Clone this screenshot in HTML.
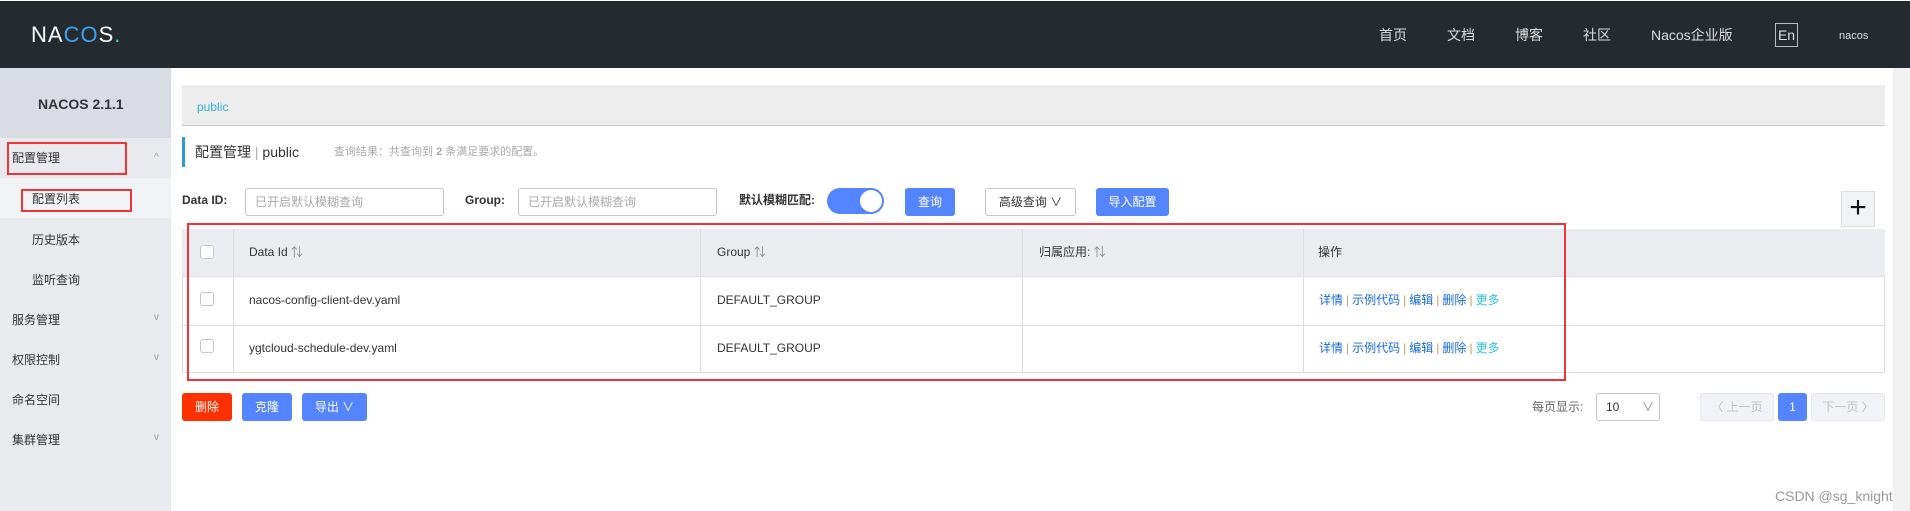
<!DOCTYPE html>
<html><head><meta charset="utf-8"><style>
*{box-sizing:border-box;margin:0;padding:0}
body{width:1910px;height:511px;overflow:hidden;background:#fff;font-family:"Liberation Sans","Noto Sans CJK SC",sans-serif;font-size:12px;color:#333;position:relative;line-height:1.15}
.a{position:absolute;white-space:nowrap}
.hdr{left:0;top:1px;width:1910px;height:67px;background:#252a2f}
.nav{top:27px;color:#ddd;font-size:14px}
.side{left:0;top:68px;width:171px;height:443px;background:#e8eaee}
.mi{left:12px;font-size:12px;color:#333}
.car{left:154px;color:#999;font-size:10px}
.btn{height:28px;line-height:28px;text-align:center;color:#fff;border-radius:3px;font-size:12px}
.inp{height:28px;border:1px solid #c4c6cf;border-radius:3px;color:#aaa;padding-left:9px;line-height:26px}
.lbl{font-weight:bold;color:#333;font-size:12px}
.cb{width:14px;height:14px;border:1px solid #c4c6cf;border-radius:3px;background:#fff}
.lk{color:#1a6ad8}
.sp{color:#c4a060;margin:0 3px}
</style></head><body>
<div class="a hdr"></div>
<div class="a" style="left:31px;top:22px;font-size:22px;color:#fff;letter-spacing:1px">NA<span style="color:#3aa3f0">CO</span>S<span style="color:#2fd0e0">.</span></div>
<div class="a nav" style="left:1379px">首页</div>
<div class="a nav" style="left:1447px">文档</div>
<div class="a nav" style="left:1515px">博客</div>
<div class="a nav" style="left:1583px">社区</div>
<div class="a nav" style="left:1651px">Nacos企业版</div>
<div class="a" style="left:1775px;top:23px;width:23px;height:24px;border:1px solid #bbb;color:#ddd;font-size:14px;text-align:center;line-height:22px">En</div>
<div class="a" style="left:1839px;top:30px;color:#ddd;font-size:11px">nacos</div>

<div class="a side"></div>
<div class="a" style="left:0;top:68px;width:171px;height:70px;background:#d9dde3"></div>
<div class="a" style="left:38px;top:96px;font-size:14px;font-weight:bold;color:#333">NACOS 2.1.1</div>
<div class="a" style="left:0;top:178px;width:171px;height:40px;background:#f2f3f5"></div>
<div class="a" style="left:7px;top:142px;width:120px;height:33px;border:2px solid #f0323a"></div>
<div class="a mi" style="top:152px">配置管理</div><div class="a car" style="top:152px">^</div>
<div class="a" style="left:21px;top:189px;width:111px;height:23px;border:2px solid #f0323a"></div>
<div class="a mi" style="left:32px;top:193px">配置列表</div>
<div class="a mi" style="left:32px;top:234px">历史版本</div>
<div class="a mi" style="left:32px;top:274px">监听查询</div>
<div class="a mi" style="top:314px">服务管理</div><div class="a car" style="top:312px">v</div>
<div class="a mi" style="top:354px">权限控制</div><div class="a car" style="top:352px">v</div>
<div class="a mi" style="top:394px">命名空间</div>
<div class="a mi" style="top:434px">集群管理</div><div class="a car" style="top:432px">v</div>

<div class="a" style="left:1893px;top:68px;width:17px;height:443px;background:#f1f1f1"></div>

<div class="a" style="left:182px;top:85px;width:1703px;height:41px;background:#ededed;border-bottom:1px solid #ccc"></div>
<div class="a" style="left:197px;top:101px;color:#2fb5d6;font-size:12px">public</div>
<div class="a" style="left:182px;top:137px;width:3px;height:30px;background:#2b9bd6"></div>
<div class="a" style="left:195px;top:144px;font-size:14px;color:#333">配置管理 <span style="color:#aaa">|</span> public</div>
<div class="a" style="left:334px;top:146px;font-size:11px;color:#aaa">查询结果：共查询到 <b>2</b> 条满足要求的配置。</div>

<div class="a lbl" style="left:182px;top:194px">Data ID:</div>
<div class="a inp" style="left:245px;top:188px;width:199px">已开启默认模糊查询</div>
<div class="a lbl" style="left:465px;top:194px">Group:</div>
<div class="a inp" style="left:518px;top:188px;width:199px">已开启默认模糊查询</div>
<div class="a lbl" style="left:739px;top:194px">默认模糊匹配:</div>
<div class="a" style="left:827px;top:188px;width:57px;height:26px;border-radius:13px;background:#5584ff"></div>
<div class="a" style="left:860px;top:190px;width:22px;height:22px;border-radius:11px;background:#fff"></div>
<div class="a btn" style="left:905px;top:188px;width:50px;background:#5584ff">查询</div>
<div class="a btn" style="left:985px;top:188px;width:91px;border:1px solid #c4c6cf;color:#333;line-height:26px">高级查询 ∨</div>
<div class="a btn" style="left:1096px;top:188px;width:73px;background:#5584ff">导入配置</div>
<div class="a" style="left:1841px;top:191px;width:34px;height:36px;background:#f2f3f5;border:1px solid #ddd;font-size:30px;line-height:32px;text-align:center;color:#111">+</div>

<div class="a" style="left:182px;top:229px;width:1703px;height:144px;border:1px solid #dcdee3"></div>
<div class="a" style="left:182px;top:229px;width:1703px;height:48px;background:#ebecf0;border-bottom:1px solid #dcdee3"></div>
<div class="a" style="left:182px;top:325px;width:1703px;height:1px;background:#dcdee3"></div>
<div class="a" style="left:233px;top:229px;width:1px;height:144px;background:#dcdee3"></div>
<div class="a" style="left:700px;top:229px;width:1px;height:144px;background:#dcdee3"></div>
<div class="a" style="left:1022px;top:229px;width:1px;height:144px;background:#dcdee3"></div>
<div class="a" style="left:1303px;top:229px;width:1px;height:144px;background:#dcdee3"></div>
<div class="a cb" style="left:200px;top:245px"></div>
<div class="a cb" style="left:200px;top:292px"></div>
<div class="a cb" style="left:200px;top:339px"></div>
<div class="a" style="left:249px;top:246px">Data Id <span style="color:#888">⇅</span></div>
<div class="a" style="left:717px;top:246px">Group <span style="color:#888">⇅</span></div>
<div class="a" style="left:1039px;top:246px">归属应用: <span style="color:#888">⇅</span></div>
<div class="a" style="left:1318px;top:246px">操作</div>
<div class="a" style="left:249px;top:294px">nacos-config-client-dev.yaml</div>
<div class="a" style="left:717px;top:294px">DEFAULT_GROUP</div>
<div class="a" style="left:249px;top:342px">ygtcloud-schedule-dev.yaml</div>
<div class="a" style="left:717px;top:342px">DEFAULT_GROUP</div>
<div class="a" style="left:1319px;top:294px"><span class="lk">详情</span><span class="sp">|</span><span class="lk">示例代码</span><span class="sp">|</span><span class="lk">编辑</span><span class="sp">|</span><span class="lk">删除</span><span class="sp">|</span><span style="color:#2fc4e0">更多</span></div>
<div class="a" style="left:1319px;top:342px"><span class="lk">详情</span><span class="sp">|</span><span class="lk">示例代码</span><span class="sp">|</span><span class="lk">编辑</span><span class="sp">|</span><span class="lk">删除</span><span class="sp">|</span><span style="color:#2fc4e0">更多</span></div>
<div class="a" style="left:187px;top:223px;width:1379px;height:158px;border:2px solid #f0323a"></div>

<div class="a btn" style="left:182px;top:393px;width:50px;background:#ff3000">删除</div>
<div class="a btn" style="left:242px;top:393px;width:50px;background:#5584ff">克隆</div>
<div class="a btn" style="left:302px;top:393px;width:65px;background:#5584ff">导出 ∨</div>
<div class="a" style="left:1532px;top:401px;color:#666">每页显示:</div>
<div class="a" style="left:1596px;top:393px;width:64px;height:28px;border:1px solid #c4c6cf;border-radius:3px;padding-left:9px;line-height:26px;color:#333">10<span style="position:absolute;left:45px;color:#888">∨</span></div>
<div class="a btn" style="left:1700px;top:393px;width:74px;background:#f2f3f7;border:1px solid #e6e7eb;color:#c0c0c0;line-height:26px">〈 上一页</div>
<div class="a btn" style="left:1778px;top:393px;width:29px;background:#5584ff">1</div>
<div class="a btn" style="left:1811px;top:393px;width:74px;background:#f2f3f7;border:1px solid #e6e7eb;color:#c0c0c0;line-height:26px">下一页 〉</div>
<div class="a" style="left:1775px;top:488px;color:#999;font-size:14px">CSDN @sg_knight</div>
</body></html>
